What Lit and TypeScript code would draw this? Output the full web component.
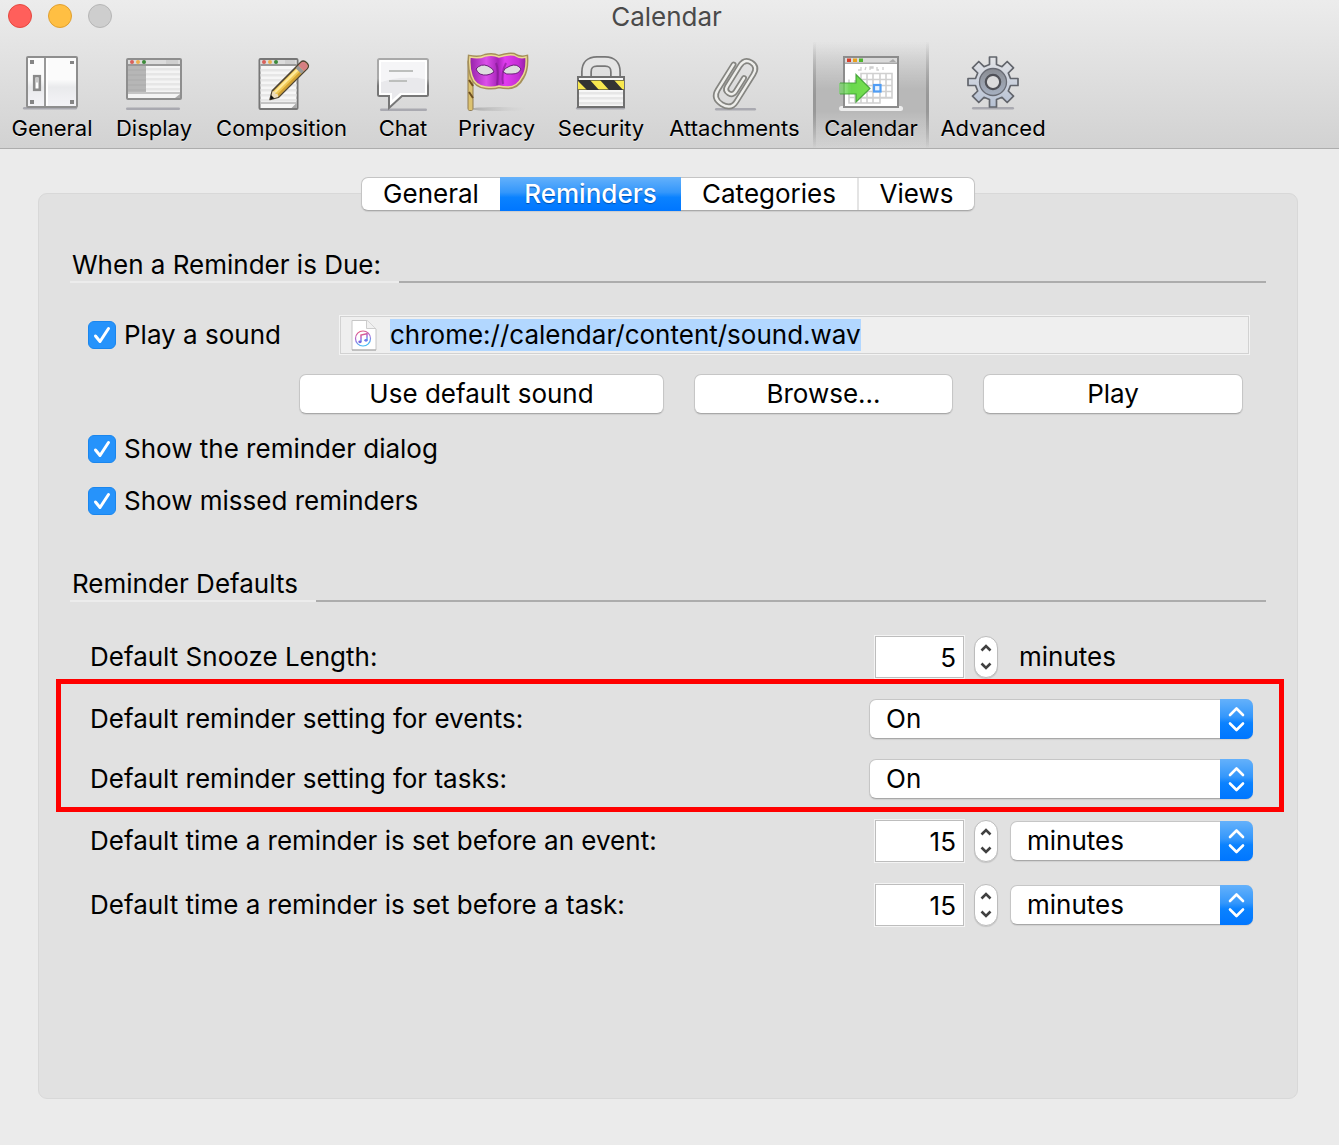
import { LitElement, html, css, svg, TemplateResult } from "lit";
import { customElement, state } from "lit/decorators.js";
import { classMap } from "lit/directives/class-map.js";

const shadowLine = (x: number, y: number, w: number) =>
  svg`<rect x=${x} y=${y} width=${w} height="2.5" rx="1.2" fill="#a9a9b0"/>`;

const windowDots = (x: number, y: number) => svg`
  <circle cx=${x} cy=${y} r="2" fill="#d9605a"/>
  <circle cx=${x + 6} cy=${y} r="2" fill="#eeb04e"/>
  <circle cx=${x + 12} cy=${y} r="2" fill="#3c8a3a"/>`;

const stripes = (x: number, y: number, w: number, rows: number) =>
  Array.from({ length: rows }, (_, i) => svg`<rect x=${x} y=${y + i * 5} width=${w} height="2.5" fill="#e6e6e6"/>`);

const icons: Record<string, TemplateResult> = {
  General: html`<svg class="icon" viewBox="0 0 64 64" aria-hidden="true">
    <defs><linearGradient id="plate" x2="0" y2="1"><stop offset="0.45" stop-color="#fbfbfb"/><stop offset="0.6" stop-color="#e9eaec"/><stop offset="1" stop-color="#f4f4f7"/></linearGradient></defs>
    ${shadowLine(3, 57, 54)}
    <rect x="7" y="7" width="50" height="50" rx="1" fill="url(#plate)" stroke="#8e8e8e" stroke-width="2"/>
    <rect x="24" y="8" width="2" height="48" fill="#999"/><rect x="26" y="8" width="2" height="48" fill="#fff"/>
    <g fill="#858585"><rect x="10" y="10" width="4" height="4"/><rect x="50" y="11" width="4" height="3"/><rect x="10" y="50" width="4" height="4"/><rect x="50" y="50" width="4" height="4"/></g>
    <rect x="14.2" y="26.2" width="5.6" height="13.6" fill="#fff" stroke="#8a8a8a" stroke-width="2.6"/>
    <rect x="15.5" y="27.5" width="3" height="5" fill="#c9c9c9"/>
  </svg>`,
  Display: html`<svg class="icon" viewBox="0 0 64 64" aria-hidden="true">
    ${shadowLine(4, 57.5, 54)}
    <rect x="5" y="9" width="54" height="40" rx="1" fill="#f4f4f4" stroke="#8e8e8e" stroke-width="2"/>
    <rect x="6" y="10" width="52" height="4" fill="#dcdcdc"/><rect x="44" y="10" width="12" height="4" fill="#cfcfcf"/>
    <rect x="6" y="14" width="52" height="2" fill="#999"/>
    ${stripes(24, 18, 34, 5)}
    <rect x="6" y="16" width="18" height="26" fill="#b6b6b6"/>
    ${[19, 24, 29, 34, 39].map((y) => svg`<rect x="6" y=${y} width="18" height="2" fill="#b0b0b0"/>`)}
    <rect x="6" y="42" width="52" height="2" fill="#c4c4c4"/>
    <path d="M58 44v4h-5z" fill="#aaa"/>${windowDots(10, 12)}
  </svg>`,
  Composition: html`<svg class="icon" viewBox="0 0 64 64" aria-hidden="true">
    <rect x="9.5" y="9" width="38" height="50" rx="1" fill="#f6f6f6" stroke="#777" stroke-width="2"/>
    <rect x="10.5" y="10" width="36" height="4" fill="#dcdcdc"/><rect x="35" y="10" width="10" height="4" fill="#cfcfcf"/>
    <rect x="10.5" y="14" width="36" height="2" fill="#999"/>
    ${stripes(10.5, 19, 36, 7)}
    <rect x="10.5" y="52" width="36" height="2" fill="#c4c4c4"/><path d="M46.5 53v5h-5z" fill="#aaa"/>
    ${windowDots(14, 12)}
    <g transform="translate(20 49.5) rotate(-45) scale(.96 1)">
      <path d="M0 0 8-4.5H50q4 0 4 4.5t-4 4.5H8z" fill="#f0c956" stroke="#4f4433" stroke-width="1.5" stroke-linejoin="round"/>
      <path d="M9-2.7H42V-.4H9z" fill="#ffe99b"/><path d="M9 1.6H42V3.8H9z" fill="#d2a132"/>
      <path d="M.8 0 8-4 9.5-1.5 8 0 9.5 1.5 8 4z" fill="#eddcba"/><path d="M0 0 4-2.4V2.4z" fill="#111"/>
      <path d="M42-4h4v8h-4z" fill="#999"/><path d="M46-4h4q3.300 0 3.300 4t-3.300 4h-4z" fill="#d67f82"/>
    </g>
  </svg>`,
  Chat: html`<svg class="icon" viewBox="0 0 64 64" aria-hidden="true">
    <defs><linearGradient id="bub" x2="0" y2="1"><stop offset="0.4" stop-color="#a9a9a9"/><stop offset="0.55" stop-color="#777"/></linearGradient></defs>
    ${shadowLine(9, 58.5, 47)}
    <path d="M8.500 9h47q1.500 0 1.500 1.500v34q0 1.500-1.500 1.500H31L18 58V46H8.500Q7 46 7 44.500v-34Q7 9 8.500 9z" fill="#fff" stroke="url(#bub)" stroke-width="2"/>
    <path d="M10 12h44v17q-22-4-44 3z" fill="#f5f5f7"/><path d="M10 32q22-7 44-3v14H29L21 50V43H10z" fill="#e9e9ec"/>
    <path d="M18 21h24M18 31h18" stroke="#bdbfbd" stroke-width="2"/>
  </svg>`,
  Privacy: html`<svg class="icon" viewBox="0 0 64 64" aria-hidden="true">
    <defs>
      <linearGradient id="mask" x2="1" y2="0"><stop stop-color="#8f1fa3"/><stop offset="0.3" stop-color="#dc50ea"/><stop offset="0.5" stop-color="#a824ba"/><stop offset="0.62" stop-color="#e23df0"/><stop offset="0.85" stop-color="#c42fd4"/><stop offset="1" stop-color="#8a1c9c"/></linearGradient>
      <linearGradient id="floor" x2="1" y2="0"><stop stop-color="#aaa"/><stop offset="1" stop-color="#ccc" stop-opacity="0"/></linearGradient>
    </defs>
    <ellipse cx="34" cy="59" rx="28" ry="2" fill="url(#floor)"/>
    <path d="M5.500 12V58" stroke="#8f7a4f" stroke-width="6" stroke-linecap="round"/>
    <path d="M5.500 10V60" stroke="#dcc270" stroke-width="4"/>
    <path d="M4 30l4 6M4 42l4 6" stroke="#6d4e20" stroke-width="2"/>
    <path d="M4 6Q14 8 20 5Q28 3 34 6Q43 3 49 4Q55 8 62 6Q63 20 58 28Q53 38 43 38Q38 38 34 37Q29 39 21 38Q10 37 6 26Q3 17 4 6z" fill="url(#mask)" stroke="#a5905a" stroke-width="2.500"/>
    <path d="M5 7Q14 9 20 6Q28 4 34 7Q43 4 49 5Q55 9 61 7Q62 20 57 27Q52 37 43 37Q38 37 34 36Q29 38 21 37Q10 36 7 26Q4 17 5 7z" fill="none" stroke="#ecd992" stroke-width="1.500"/>
    <path d="M31 13Q34 20 32 35M38 34Q36 23 41 13" stroke="#7d1a8c" stroke-width="2" fill="none" opacity=".6"/>
    <path d="M11 19Q16 13 23 16Q29 19 29 22Q22 27 15 24Q12 22 11 19zM38 22Q39 18 45 16Q52 13 56 19Q54 24 47 24Q41 25 38 22z" fill="#dedede" stroke="#6c1c7a" stroke-width="1"/>
  </svg>`,
  Security: html`<svg class="icon" viewBox="0 0 64 64" aria-hidden="true">
    <defs><clipPath id="band"><rect x="9" y="30" width="46" height="10"/></clipPath></defs>
    ${shadowLine(7, 57, 49)}
    <path d="M17.500 27V22Q17.500 11.500 28 11.500h8Q46.500 11.500 46.500 22V27" fill="none" stroke="#777" stroke-width="11"/>
    <path d="M17.500 27V22Q17.500 11.500 28 11.500h8Q46.500 11.500 46.500 22V27" fill="none" stroke="#e5e5e5" stroke-width="7.500"/>
    <rect x="9" y="27" width="46" height="30" fill="#f7f7f7" stroke="#707070" stroke-width="2"/>
    ${stripes(10, 42, 44, 3)}
    <g clip-path="url(#band)"><rect x="8" y="30" width="48" height="10" fill="#333"/>
      <path d="M9 31 18 40H8zM21 30h10l9 10H30zM45 30h10l9 10H54zM-1 30h9l9 10H8z" fill="#f8e84f"/></g>
    <path d="M9 30.500h46M9 39.500h46" stroke="#333" stroke-width="1" opacity=".6"/>
  </svg>`,
  Attachments: html`<svg class="icon" viewBox="0 0 64 64" aria-hidden="true">
    ${shadowLine(12, 58, 41)}
    <g fill="none" stroke-linecap="round" stroke-linejoin="round" transform="translate(32 33) rotate(32)">
      <path d="M-11-15V15Q-11 25 0 25T11 15V-17Q11-26 3-26T-5-17V7Q-5 12 0 12T5 7V-9" stroke="#858581" stroke-width="5.800"/>
      <path d="M-11-15V15Q-11 25 0 25T11 15V-17Q11-26 3-26T-5-17V7Q-5 12 0 12T5 7V-9" stroke="#eeeeeb" stroke-width="2.400"/>
    </g>
  </svg>`,
  Calendar: html`<svg class="icon" viewBox="0 0 64 64" aria-hidden="true">
    <defs><linearGradient id="arr" x2="1" y2="0"><stop stop-color="#69d35a" stop-opacity=".55"/><stop offset="0.4" stop-color="#69d84e"/><stop offset="1" stop-color="#78e04f"/></linearGradient></defs>
    <rect x="0" y="56" width="64" height="5" rx="2.500" fill="#ededed"/>
    <rect x="5" y="7" width="54" height="50" fill="#fff" stroke="#8c8c8c" stroke-width="2"/>
    <rect x="6" y="8" width="52" height="5" fill="#dadada"/><rect x="6" y="12.500" width="52" height="1.500" fill="#aaa"/>
    <rect x="8" y="8.500" width="4" height="3.500" fill="#d63c28"/><rect x="14" y="8.500" width="4" height="3.500" fill="#e8a11f"/><rect x="20" y="8.500" width="4" height="3.500" fill="#4fb52f"/>
    <path d="M50 12l4-3 3 3z" fill="#aaa"/>
    <path d="M19 20h3v-3M26 20l1-3M31 20v-3h3v1h-3M38 17v3h2M44 17v3" stroke="#cfcfcf" fill="none" stroke-width="1.300"/>
    <path d="M22 23.500H53V48H22zM22 29.500H53M10 35.500H53M10 41.500H53M10 47.500H53M10 29.500V53H41V23.500M16 30V53M22 24V53M28 24V53M34 24V53M47 24V48" fill="none" stroke="#d0d0d0" stroke-width="1.600"/>
    <rect x="35" y="35" width="6.500" height="6.500" fill="#eaf4ff" stroke="#4f9df5" stroke-width="2.200"/>
    <path d="M0 33H17V24.500L31 38.500 17 52V44H0z" fill="url(#arr)"/>
    <path d="M1 33H17V24.500L31 38.500 17 52V44H1" fill="none" stroke="#3d9d32" stroke-width="1.200" opacity=".85"/>
  </svg>`,
  Advanced: html`<svg class="icon" viewBox="0 0 64 64" aria-hidden="true">
    <defs><linearGradient id="gear" x2="0" y2="1"><stop stop-color="#e3e4e7"/><stop offset="1" stop-color="#b5c0d3"/></linearGradient>
    <linearGradient id="hub" x2="0" y2="1"><stop stop-color="#898c92"/><stop offset="1" stop-color="#a7b1c2"/></linearGradient></defs>
    ${shadowLine(11, 57, 42)}
    <path d="M28.500 7h7v7.500l5.500 2.200 5.200-5.200 6.300 6.300-5.200 5.200 2.200 5.500H57v7h-7.500l-2.200 5.500 5.200 5.200-6.300 6.300-5.200-5.200-5.500 2.200V57h-7v-7.500l-5.500-2.200-5.200 5.200-6.300-6.300 5.200-5.200-2.200-5.500H7v-7h7.500l2.200-5.500-5.200-5.200 6.300-6.300 5.200 5.200 5.500-2.200z" fill="url(#gear)" stroke="#62656c" stroke-width="1.700" stroke-linejoin="round"/>
    <circle cx="32" cy="32" r="13.500" fill="url(#hub)" stroke="#686b74" stroke-width="1.300"/>
    <circle cx="32" cy="32" r="7.200" fill="#dcdcdc" stroke="#505157" stroke-width="2.200"/>
  </svg>`,
};

const fileIcon = html`<svg class="file" viewBox="0 0 26 32" aria-hidden="true">
  <defs><linearGradient id="note" x2="0.3" y2="1"><stop stop-color="#f2566f"/><stop offset="0.55" stop-color="#a768dc"/><stop offset="1" stop-color="#45b9f2"/></linearGradient></defs>
  <path d="M1 1.500H16L25 10V31H1z" fill="#fff" stroke="#c6c6c6" stroke-width="1"/>
  <path d="M1 31h24" stroke="#a4a4a4"/><path d="M15.500 1.500V9.500H24.500" fill="#f1f1f1" stroke="#cdcdcd"/>
  <circle cx="12" cy="19.500" r="7.500" fill="none" stroke="url(#note)" stroke-width="1.200"/>
  <path d="M10 22.500V16l6-1.300V21" fill="none" stroke="url(#note)" stroke-width="1.500"/>
  <ellipse cx="9" cy="22.800" rx="1.700" ry="1.400" fill="#7966e0"/><ellipse cx="15" cy="21.300" rx="1.700" ry="1.400" fill="#6d79ea"/>
</svg>`;

const chevron = (up: boolean) => html`<svg class="chev" viewBox="0 0 12 8" aria-hidden="true">
  <path d=${up ? "M1.500 6.500 6 2l4.500 4.500" : "M1.500 1.500 6 6l4.500-4.500"} /></svg>`;

@customElement("app-root")
export class AppRoot extends LitElement {
  @state() private tab = "Reminders";
  @state() private amounts: Record<string, number> = { snooze: 5, event: 15, task: 15 };

  static styles = css`
    :host {
      display: flex;
      flex-direction: column;
      min-height: 100vh;
      background: #ebebeb;
      color: #000;
      font: 26px/32px Inter, "Liberation Sans", sans-serif;
    }
    * { box-sizing: border-box; }
    button, input, select { font: inherit; color: inherit; margin: 0; padding: 0; border: 0; }

    .chrome {
      background: linear-gradient(#ececec, #d2d2d2);
      border-bottom: 1px solid #adadad;
    }
    .titlebar { display: grid; grid-template-columns: 1fr auto 1fr; align-items: center; height: 34px; padding: 0 14px 0 8px; }
    .lights { display: flex; gap: 16px; padding-bottom: 2px; }
    .light { width: 24px; height: 24px; border-radius: 50%; border: 1px solid #b6b6b6; background: #cecece; }
    .close { background: #ff5f5b; border-color: #e5483f; }
    .minimize { background: #ffbf43; border-color: #e0a030; }
    .title { margin: 0; font-size: 26px; font-weight: 400; color: #4a4a4a; }

    .tools {
      display: grid;
      grid-template-columns: 104px 100px 155px 88px 99px 110px 157px 116px 128px;
      padding-top: 8px;
    }
    .tool {
      display: flex; flex-direction: column; align-items: center;
      height: 106px; padding-top: 8px;
      background: none; font-size: 22px; line-height: 28px; white-space: nowrap;
    }
    .tool span { text-shadow: 0 1px 0 #ffffff90; }
    .tool.on {
      border: 2px solid; border-width: 0 3px;
      border-image: linear-gradient(#8a8a8a00, #989898 50%, #989898 65%, #98989800) 1;
      background: linear-gradient(#b8b8b800, #b8b8b8 45%, #b8b8b8 65%, #c8c8c800);
    }
    .icon { width: 64px; height: 64px; flex: none; overflow: visible; }

    .content { flex: 1; display: flex; flex-direction: column; padding: 28px 41px 46px 38px; }
    .tabs {
      align-self: center; z-index: 1;
      display: grid; grid-template-columns: 138px 181px 176px 117px;
      height: 34px; border-radius: 7px; background: #fff;
      border: 1px solid #c4c4c4; border-bottom-color: #a9a9a9;
      box-shadow: 0 1px 1px #00000018;
    }
    .tab { background: none; line-height: 32px; }
    .tab + .tab { border-left: 2px solid #e4e4e4; }
    .tab.on, .tab.on + .tab { border-left: 0; }
    .tab.on {
      margin: -1px 0; color: #fff; font-weight: 500; text-shadow: 0 1px 1px #0050b0;
      background: linear-gradient(#64b1fb, #3497fb 45%, #0a82ff 60%, #0076ff);
    }
    .panel {
      flex: 1; margin-top: -18px; padding: 55px 31px 0;
      border: 1px solid #d8d8d8; border-radius: 9px; background: #e1e1e1;
    }
    .group { margin: 0; font-size: 26px; font-weight: 400; display: flex; }
    .group::after { content: ""; flex: 1; border-bottom: 2px solid #acacac; }
    .group span { padding: 0 18px 0 2px; border-bottom: 2px solid #ececec; }

    .sound { display: flex; align-items: center; justify-content: space-between; padding: 32px 16px 0 18px; }
    .check { display: flex; align-items: center; gap: 8px; white-space: nowrap; }
    .box { display: grid; width: 28px; height: 28px; }
    .box > * { grid-area: 1 / 1; }
    .box input { appearance: none; width: 28px; height: 28px; border-radius: 6px; background: #fff; border: 1px solid #bbb; }
    .box input:checked { background: #2693fb; border-color: #1a86ee; }
    .box input:not(:checked) + svg { display: none; }
    .box svg { width: 28px; height: 28px; pointer-events: none; }
    .field {
      display: flex; align-items: center; gap: 13px;
      flex: 0 1 911px; margin-left: 32px; height: 40px; padding: 0 11px;
      border: 1px solid #f3f3f3; outline: 1px solid #d2d2d2; outline-offset: -2px;
      background: #efefef;
    }
    .file { width: 26px; height: 32px; flex: none; }
    .path { field-sizing: content; height: 32px; background: #b2d7ff; }

    .actions { display: grid; grid-template-columns: 365fr 259fr 260fr; gap: 30px; padding: 19px 23px 0 229px; }
    .push {
      height: 40px; border-radius: 7px; background: #fff;
      border: 1px solid #c6c6c6; border-bottom-color: #a8a8a8; box-shadow: 0 1px 1px #00000015;
    }
    .checks { display: grid; gap: 20px; justify-content: start; padding: 19px 18px 51px; }

    .rows { display: grid; padding-top: 33px; }
    .row {
      display: grid; grid-template-columns: 1fr 384px; align-items: center;
      padding: 0 13px 0 20px;
    }
    .row + .row { margin-top: 20px; }
    .marked { margin: 0 -18px 7px -14px; padding: 15px 26px 8px 29px; border: 5px solid #f00; }
    .marked .row { padding: 0; }
    .amount { display: grid; grid-template-columns: 91px 24px 1fr; align-items: center; column-gap: 9px; padding-left: 5px; }
    .number {
      appearance: textfield; width: 100%; height: 44px; padding-right: 8px; text-align: right;
      background: #fff; border: 1px solid #f4f4f4; outline: 1px solid #bdbdbd; outline-offset: -2px;
    }
    .number::-webkit-inner-spin-button { appearance: none; margin: 0; }
    .stepper {
      display: grid; grid-template-rows: 1fr 1fr; height: 42px; padding: 2px 0; border-radius: 12px; background: #fff;
      border: 1px solid #bcbcbc; box-shadow: 0 1px 1px #00000020;
    }
    .step { display: grid; place-items: center; background: none; }
    .chev { width: 12px; height: 8px; fill: none; stroke: #404040; stroke-width: 2.6; }
    .unit { padding-left: 12px; }
    .picker { display: grid; height: 40px; }
    .amount .picker { margin-left: 3px; }
    .picker > * { grid-area: 1 / 1; }
    .picker select {
      appearance: none; width: 100%; height: 40px; padding: 0 44px 0 16px; border-radius: 7px; background: #fff;
      border: 1px solid #c6c6c6; border-bottom-color: #a8a8a8; box-shadow: 0 1px 1px #00000015;
    }
    .cap {
      justify-self: end; width: 33px; height: 40px; border-radius: 0 7px 7px 0; pointer-events: none;
      background: linear-gradient(#64b1fb, #3497fb 45%, #0a82ff 60%, #0076ff);
      fill: none; stroke: #fff; stroke-width: 2.6; stroke-linecap: round; stroke-linejoin: round;
    }
  `;

  private check(id: string, text: string) {
    return html`<label class="check" for=${id}>
      <span class="box"><input type="checkbox" id=${id} checked />
        <svg viewBox="0 0 28 28" aria-hidden="true"><path d="M7.500 15 12 20.500 20.500 7.500" fill="none" stroke="#fff" stroke-width="3" stroke-linecap="round" stroke-linejoin="round"/></svg></span>
      <span>${text}</span></label>`;
  }

  private picker(id: string, label: string, options: string[]) {
    return html`<span class="picker">
      <select id=${id} aria-label=${label}>${options.map((o) => html`<option>${o}</option>`)}</select>
      <svg class="cap" viewBox="0 0 33 40" aria-hidden="true"><path d="M10 16 16.500 9.500 23 16M10 24.500 16.500 31 23 24.500"/></svg>
    </span>`;
  }

  private step(key: string, by: number) {
    this.amounts = { ...this.amounts, [key]: Math.max(0, this.amounts[key] + by) };
  }

  private amountRow(key: string, label: string, unit: unknown) {
    return html`<div class="row"><label for=${key}>${label}</label>
      <div class="amount">
        <input class="number" type="number" id=${key} .value=${String(this.amounts[key])} />
        <span class="stepper">
          <button class="step" aria-label="Increase" @click=${() => this.step(key, 1)}>${chevron(true)}</button>
          <button class="step" aria-label="Decrease" @click=${() => this.step(key, -1)}>${chevron(false)}</button>
        </span>${unit}</div></div>`;
  }

  render() {
    const units = ["minutes", "hours", "days"];
    return html`
      <header class="chrome">
        <div class="titlebar">
          <div class="lights">
            <button class="light close" aria-label="Close"></button>
            <button class="light minimize" aria-label="Minimize"></button>
            <button class="light" aria-label="Zoom" disabled></button>
          </div>
          <h1 class="title">Calendar</h1>
        </div>
        <nav class="tools">
          ${Object.entries(icons).map(([name, icon]) => html`
            <button class=${classMap({ tool: true, on: name === "Calendar" })}>${icon}<span>${name}</span></button>`)}
        </nav>
      </header>
      <main class="content">
        <div class="tabs" role="tablist">
          ${["General", "Reminders", "Categories", "Views"].map((t) => html`
            <button role="tab" aria-selected=${t === this.tab} class=${classMap({ tab: true, on: t === this.tab })}
              @click=${() => (this.tab = t)}>${t}</button>`)}
        </div>
        <section class="panel">
          <h2 class="group"><span>When a Reminder is Due:</span></h2>
          <div class="sound">
            ${this.check("play-sound", "Play a sound")}
            <div class="field">${fileIcon}<input class="path" type="text" readonly aria-label="Sound file" value="chrome://calendar/content/sound.wav" /></div>
          </div>
          <div class="actions">
            <button class="push">Use default sound</button>
            <button class="push">Browse...</button>
            <button class="push">Play</button>
          </div>
          <div class="checks">
            ${this.check("show-dialog", "Show the reminder dialog")}
            ${this.check("show-missed", "Show missed reminders")}
          </div>
          <h2 class="group"><span>Reminder Defaults</span></h2>
          <div class="rows">
            ${this.amountRow("snooze", "Default Snooze Length:", html`<span class="unit">minutes</span>`)}
            <div class="marked">
              <div class="row"><label for="events-on">Default reminder setting for events:</label>${this.picker("events-on", "Reminder setting for events", ["On", "Off"])}</div>
              <div class="row"><label for="tasks-on">Default reminder setting for tasks:</label>${this.picker("tasks-on", "Reminder setting for tasks", ["On", "Off"])}</div>
            </div>
            ${this.amountRow("event", "Default time a reminder is set before an event:", this.picker("event-unit", "Event reminder unit", units))}
            ${this.amountRow("task", "Default time a reminder is set before a task:", this.picker("task-unit", "Task reminder unit", units))}
          </div>
        </section>
      </main>`;
  }
}
